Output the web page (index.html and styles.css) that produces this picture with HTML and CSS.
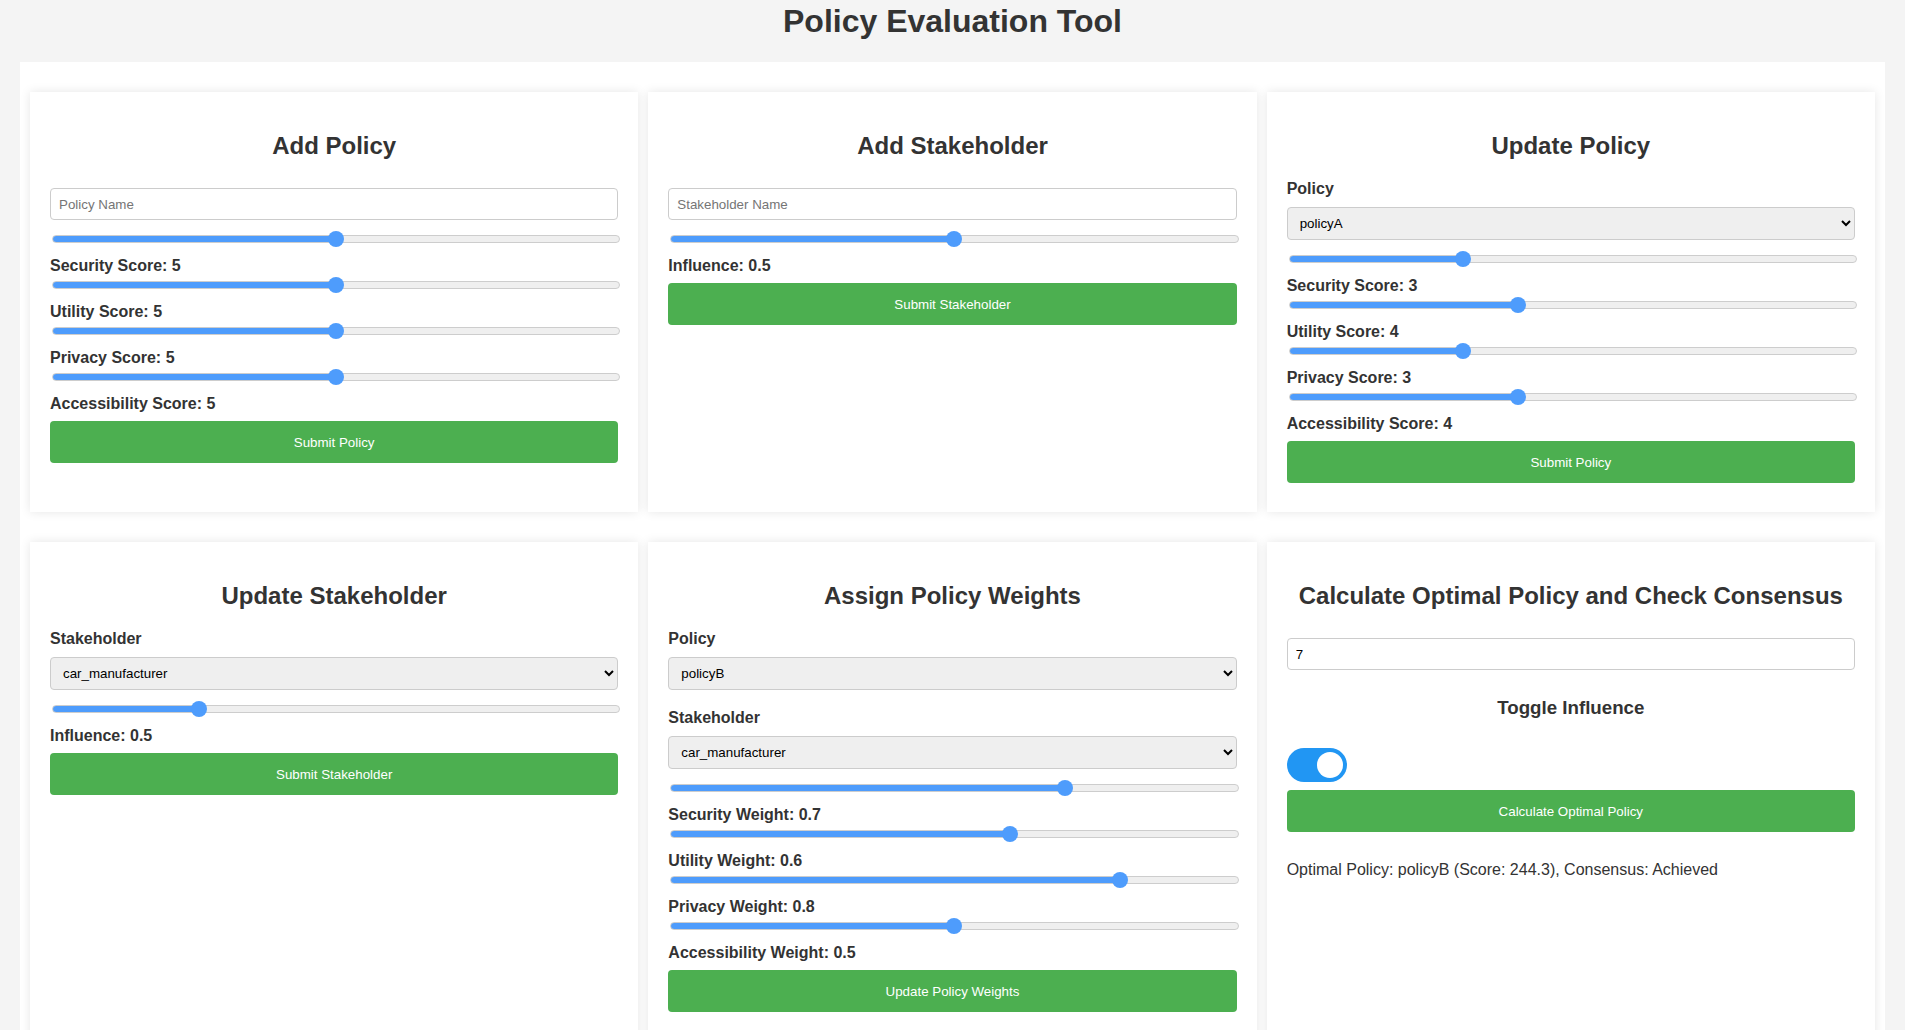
FILE: index.html
```html
<!DOCTYPE html>
<html lang="en">
<head>
<meta charset="utf-8">
<title>Policy Evaluation Tool</title>
<link rel="stylesheet" href="styles.css">
</head>
<body>
<h1 class="page-title">Policy Evaluation Tool</h1>
<div class="container">
  <section class="card">
    <h2 class="card-title">Add Policy</h2>
    <input class="text-input" type="text" placeholder="Policy Name">
    <input class="range" type="range" min="0" max="10" value="5" style="--v:0.5">
    <div class="value-label">Security Score: 5</div>
    <input class="range" type="range" min="0" max="10" value="5" style="--v:0.5">
    <div class="value-label">Utility Score: 5</div>
    <input class="range" type="range" min="0" max="10" value="5" style="--v:0.5">
    <div class="value-label">Privacy Score: 5</div>
    <input class="range" type="range" min="0" max="10" value="5" style="--v:0.5">
    <div class="value-label">Accessibility Score: 5</div>
    <button class="btn">Submit Policy</button>
  </section>

  <section class="card">
    <h2 class="card-title">Add Stakeholder</h2>
    <input class="text-input" type="text" placeholder="Stakeholder Name">
    <input class="range" type="range" min="0" max="1" step="0.1" value="0.5" style="--v:0.5">
    <div class="value-label">Influence: 0.5</div>
    <button class="btn">Submit Stakeholder</button>
  </section>

  <section class="card">
    <h2 class="card-title">Update Policy</h2>
    <div class="field-label">Policy</div>
    <select class="select"><option>policyA</option><option>policyB</option></select>
    <input class="range" type="range" min="0" max="10" value="3" style="--v:0.3">
    <div class="value-label">Security Score: 3</div>
    <input class="range" type="range" min="0" max="10" value="4" style="--v:0.4">
    <div class="value-label">Utility Score: 4</div>
    <input class="range" type="range" min="0" max="10" value="3" style="--v:0.3">
    <div class="value-label">Privacy Score: 3</div>
    <input class="range" type="range" min="0" max="10" value="4" style="--v:0.4">
    <div class="value-label">Accessibility Score: 4</div>
    <button class="btn">Submit Policy</button>
  </section>

  <section class="card">
    <h2 class="card-title">Update Stakeholder</h2>
    <div class="field-label">Stakeholder</div>
    <select class="select"><option>car_manufacturer</option></select>
    <input class="range" type="range" min="0" max="2" step="0.1" value="0.5" style="--v:0.25">
    <div class="value-label">Influence: 0.5</div>
    <button class="btn">Submit Stakeholder</button>
  </section>

  <section class="card">
    <h2 class="card-title">Assign Policy Weights</h2>
    <div class="field-label">Policy</div>
    <select class="select"><option>policyB</option><option>policyA</option></select>
    <div class="field-label field-label--spaced">Stakeholder</div>
    <select class="select"><option>car_manufacturer</option></select>
    <input class="range" type="range" min="0" max="1" step="0.1" value="0.7" style="--v:0.7">
    <div class="value-label">Security Weight: 0.7</div>
    <input class="range" type="range" min="0" max="1" step="0.1" value="0.6" style="--v:0.6">
    <div class="value-label">Utility Weight: 0.6</div>
    <input class="range" type="range" min="0" max="1" step="0.1" value="0.8" style="--v:0.8">
    <div class="value-label">Privacy Weight: 0.8</div>
    <input class="range" type="range" min="0" max="1" step="0.1" value="0.5" style="--v:0.5">
    <div class="value-label">Accessibility Weight: 0.5</div>
    <button class="btn">Update Policy Weights</button>
  </section>

  <section class="card">
    <h2 class="card-title">Calculate Optimal Policy and Check Consensus</h2>
    <input class="text-input text-input--value" type="text" value="7">
    <h3 class="sub-title">Toggle Influence</h3>
    <label class="switch">
      <input class="switch-input" type="checkbox" checked>
      <span class="switch-slider"></span>
    </label>
    <button class="btn">Calculate Optimal Policy</button>
    <p class="result">Optimal Policy: policyB (Score: 244.3), Consensus: Achieved</p>
  </section>
</div>
</body>
</html>
```

FILE: styles.css
```css
* {
  box-sizing: border-box;
}

body {
  margin: 0;
  padding: 0 20px;
  background: #f4f4f4;
  color: #333;
  font-family: "Liberation Sans", Arial, sans-serif;
}

.page-title {
  margin: 3px 0 22px;
  font-size: 32px;
  font-weight: bold;
  text-align: center;
  line-height: normal;
  color: #333;
}

.container {
  background: #fff;
  padding: 30px 10px;
  display: grid;
  grid-template-columns: repeat(3, 1fr);
  column-gap: 10px;
  row-gap: 30px;
}

.card {
  background: #fff;
  padding: 20px 20px 21px;
  box-shadow: 0 0 10px rgba(0, 0, 0, 0.1);
  display: flex;
  flex-direction: column;
  min-width: 0;
}

.card-title {
  margin: 20px 0;
  font-size: 24px;
  font-weight: bold;
  text-align: center;
  line-height: normal;
  color: #333;
}

.text-input {
  display: block;
  width: 100%;
  height: 32px;
  margin: 8px 0 9px;
  padding: 0 8px;
  border: 1px solid #ccc;
  border-radius: 4px;
  background: #fff;
  font-family: "Liberation Sans", Arial, sans-serif;
  font-size: 13.333px;
  color: #000;
}

.text-input::placeholder {
  color: #757575;
}

.field-label {
  font-size: 16px;
  font-weight: bold;
  line-height: 18px;
  color: #333;
}

.field-label--spaced {
  margin-top: 10px;
}

.select {
  display: block;
  width: 100%;
  height: 33px;
  margin: 9px 0 9px;
  padding: 0 8px;
  border: 1px solid #ccc;
  border-radius: 4px;
  background-color: #efefef;
  font-family: "Liberation Sans", Arial, sans-serif;
  font-size: 13.333px;
  color: #000;
}

.range {
  -webkit-appearance: none;
  appearance: none;
  display: block;
  width: 100%;
  height: 16px;
  margin: 2px 0 2px 2px;
  padding: 0;
  background: transparent;
  flex-shrink: 0;
}

.range::-webkit-slider-runnable-track {
  height: 8px;
  border-radius: 4px;
  border: 1px solid #cdcdcd;
  background: linear-gradient(to right,
    #4e9cfc 0,
    #4e9cfc calc(7px + var(--v) * (100% - 14px)),
    #efefef calc(7px + var(--v) * (100% - 14px)),
    #efefef 100%);
}

.range::-webkit-slider-thumb {
  -webkit-appearance: none;
  appearance: none;
  width: 16px;
  height: 16px;
  margin-top: -5px;
  border: none;
  border-radius: 50%;
  background: #4e9cfc;
}

.value-label {
  margin-top: 7px;
  font-size: 16px;
  font-weight: bold;
  line-height: 19px;
  color: #333;
}

.btn {
  display: block;
  width: 100%;
  height: 42px;
  margin: 8px 0;
  border: none;
  border-radius: 4px;
  background: #4caf50;
  color: #fff;
  font-family: "Liberation Sans", Arial, sans-serif;
  font-size: 13.333px;
  cursor: pointer;
  flex-shrink: 0;
}

.sub-title {
  margin: 17.72px 0 18.72px;
  font-size: 18.72px;
  font-weight: bold;
  text-align: center;
  line-height: normal;
  color: #333;
}

.switch {
  position: relative;
  display: block;
  align-self: flex-start;
  width: 60px;
  height: 34px;
  margin-top: 11px;
  flex-shrink: 0;
}

.switch-input {
  opacity: 0;
  width: 0;
  height: 0;
  margin: 0;
}

.switch-slider {
  position: absolute;
  inset: 0;
  border-radius: 34px;
  background: #ccc;
}

.switch-slider::before {
  content: "";
  position: absolute;
  left: 4px;
  bottom: 4px;
  width: 26px;
  height: 26px;
  border-radius: 50%;
  background: #fff;
}

.switch-input:checked + .switch-slider {
  background: #2196f3;
}

.switch-input:checked + .switch-slider::before {
  transform: translateX(26px);
}

.result {
  margin: 21px 0 0;
  font-size: 16px;
  line-height: 18px;
  color: #333;
}
```
